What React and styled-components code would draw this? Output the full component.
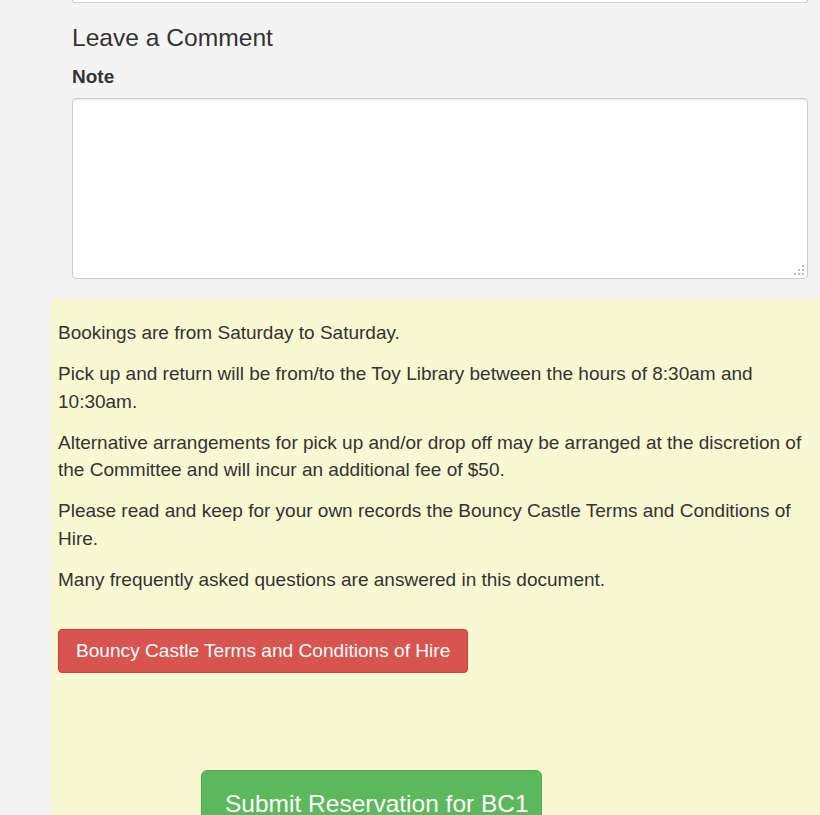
import React from "react";
import styled, { createGlobalStyle } from "styled-components";

const Global = createGlobalStyle`
  html, body { margin: 0; padding: 0; background: #f4f4f4; }
  body {
    font-family: "Liberation Sans", Arial, sans-serif;
    color: #333;
    overflow: hidden;
  }
  * { box-sizing: border-box; }
`;

const Page = styled.div`
  width: 820px;
  height: 815px;
  overflow: hidden;
  display: flex;
  flex-direction: column;
`;

const CommentSection = styled.section`
  padding: 0 12px 0 72px;
  display: flex;
  flex-direction: column;
`;

const PrevFieldEdge = styled.div`
  height: 3px;
  border: 1px solid #ccc;
  border-top: none;
  border-radius: 0 0 4px 4px;
  background: #fff;
`;

const Heading = styled.h3`
  margin: 22px 0 0;
  font-size: 24.6px;
  font-weight: 400;
  line-height: 26px;
  color: #333;
`;

const Label = styled.label`
  margin-top: 12px;
  font-size: 19px;
  font-weight: 700;
  line-height: 28px;
`;

const FieldWrap = styled.div`
  position: relative;
  margin-top: 7px;
`;

const TextArea = styled.textarea`
  display: block;
  width: 100%;
  height: 181px;
  border: 1px solid #ccc;
  border-radius: 4px;
  background: #fff;
  box-shadow: inset 0 1px 1px rgba(0, 0, 0, 0.075);
  resize: none;
  font: inherit;
  padding: 8px 12px;
`;

const Grip = styled.svg`
  position: absolute;
  right: 3px;
  bottom: 3px;
  width: 11px;
  height: 11px;
`;

const InfoPanel = styled.section`
  margin: 19px 0 0 51px;
  flex: 1;
  background: #f8f8d3;
  padding: 21px 7px 0;
  display: flex;
  flex-direction: column;
  align-items: flex-start;
`;

const Para = styled.p`
  margin: 0 0 13.5px;
  font-size: 19px;
  line-height: 27.5px;
  color: #333;
`;

const DangerButton = styled.button`
  margin-top: 22px;
  height: 44px;
  padding: 0 17px 0 17px;
  background: #d9534f;
  border: 1px solid #d43f3a;
  border-radius: 4px;
  color: #fff;
  font-family: inherit;
  font-size: 19.1px;
`;

const SuccessButton = styled.button`
  margin: 97px 0 0 143px;
  padding: 17px 12px 20px 23px;
  background: #5cb85c;
  border: 1px solid #4cae4c;
  border-radius: 6px;
  color: #fff;
  font-family: inherit;
  font-size: 24.5px;
  line-height: 32px;
`;

const paragraphs = [
  "Bookings are from Saturday to Saturday.",
  "Pick up and return will be from/to the Toy Library between the hours of 8:30am and 10:30am.",
  "Alternative arrangements for pick up and/or drop off may be arranged at the discretion of the Committee and will incur an additional fee of $50.",
  "Please read and keep for your own records the Bouncy Castle Terms and Conditions of Hire.",
  "Many frequently asked questions are answered in this document.",
];

export default function App() {
  return (
    <>
      <Global />
      <Page>
        <CommentSection>
          <PrevFieldEdge />
          <Heading>Leave a Comment</Heading>
          <Label htmlFor="note">Note</Label>
          <FieldWrap>
            <TextArea id="note" />
            <Grip viewBox="0 0 11 11">
              <g fill="#bbb">
                <rect x="8" y="0" width="2" height="2" />
                <rect x="4" y="4" width="2" height="2" />
                <rect x="8" y="4" width="2" height="2" />
                <rect x="0" y="8" width="2" height="2" />
                <rect x="4" y="8" width="2" height="2" />
                <rect x="8" y="8" width="2" height="2" />
              </g>
            </Grip>
          </FieldWrap>
        </CommentSection>
        <InfoPanel>
          {paragraphs.map((t) => (
            <Para key={t}>{t}</Para>
          ))}
          <DangerButton>Bouncy Castle Terms and Conditions of Hire</DangerButton>
          <SuccessButton>Submit Reservation for BC1</SuccessButton>
        </InfoPanel>
      </Page>
    </>
  );
}
